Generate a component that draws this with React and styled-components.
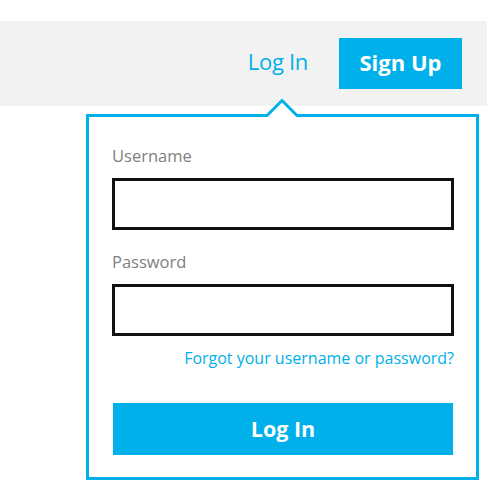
import React from 'react';
import styled, { createGlobalStyle } from 'styled-components';

const blue = '#00b0ea';

const GlobalStyle = createGlobalStyle`
    body {
        margin: 0;
        background: #fff;
        font-family: 'Open Sans', 'Noto Sans', sans-serif;
    }
`;

const Page = styled.div`
    padding-top: 21px;
`;

const TopBar = styled.div`
    width: 487px;
    height: 85px;
    box-sizing: border-box;
    background: #f2f2f2;
    display: flex;
    align-items: center;
    justify-content: flex-end;
    gap: 31px;
    padding-right: 25px;
`;

const TopLink = styled.a`
    color: ${blue};
    font-size: 22px;
    line-height: 26px;
    letter-spacing: -0.3px;
    margin-bottom: 5px;
    text-decoration: none;
    cursor: pointer;
`;

const SignUp = styled.button`
    width: 123px;
    height: 51px;
    border: none;
    padding: 0 0 4px;
    background: ${blue};
    color: #fff;
    font-family: inherit;
    font-weight: 700;
    font-size: 22px;
    cursor: pointer;
`;

const Panel = styled.div`
    position: relative;
    margin: 8px 0 0 86px;
    width: 393px;
    box-sizing: border-box;
    border: 3px solid ${blue};
    background: #fff;
    padding: 29px 22px 22px 23px;
    display: flex;
    flex-direction: column;
`;

const Arrow = styled.svg`
    position: absolute;
    left: 175px;
    top: -21px;
    width: 36px;
    height: 22px;
`;

const Label = styled.label`
    color: #7f8083;
    font-size: 16.5px;
    line-height: 20px;
    margin: ${p => (p.$first ? '0' : '22px')} 0 12px;
`;

const Input = styled.input`
    width: 342px;
    height: 52px;
    box-sizing: border-box;
    border: 3px solid #111;
    outline: none;
    padding: 0 10px;
    font-family: inherit;
    font-size: 16px;
`;

const Forgot = styled.a`
    align-self: flex-end;
    margin-top: 12px;
    color: ${blue};
    font-size: 16px;
    line-height: 20px;
    text-decoration: none;
    cursor: pointer;
`;

const Submit = styled.button`
    margin: 35px 1px 0;
    height: 52px;
    border: none;
    padding: 0 0 2px;
    background: ${blue};
    color: #fff;
    font-family: inherit;
    font-weight: 700;
    font-size: 21.5px;
    cursor: pointer;
`;

export default function App() {
    return (
        <Page>
            <GlobalStyle />
            <TopBar>
                <TopLink>Log In</TopLink>
                <SignUp>Sign Up</SignUp>
            </TopBar>
            <Panel>
                <Arrow viewBox="0 0 36 22">
                    <path d="M1.5 21.5 L18 5 L34.5 21.5 Z" fill="#fff" />
                    <polyline
                        points="0,19.5 3,19.5 18,4.5 33,19.5 36,19.5"
                        fill="none"
                        stroke={blue}
                        strokeWidth="3"
                    />
                </Arrow>
                <Label $first>Username</Label>
                <Input type="text" />
                <Label>Password</Label>
                <Input type="password" />
                <Forgot>Forgot your username or password?</Forgot>
                <Submit>Log In</Submit>
            </Panel>
        </Page>
    );
}
